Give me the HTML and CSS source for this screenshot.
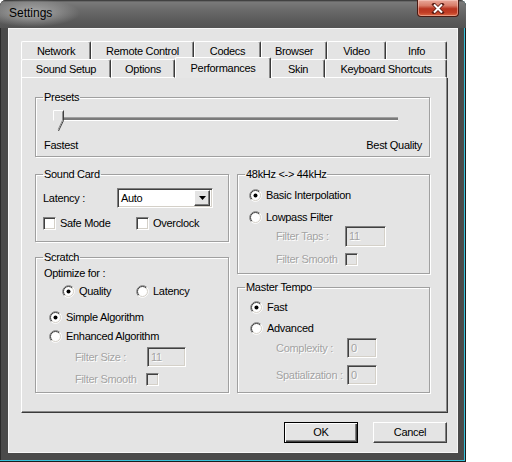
FILE: index.html
```html
<!DOCTYPE html>
<html>
<head>
<meta charset="utf-8">
<title>Settings</title>
<link rel="stylesheet" href="styles.css">
</head>
<body>
<svg class="defs" width="0" height="0">
  <defs>
    <symbol id="rb" viewBox="0 0 13 13">
      <circle cx="6.5" cy="6.5" r="5.5" fill="#fff"/>
      <path d="M2.26 10.74A6 6 0 0 1 10.74 2.26" fill="none" stroke="#808080"/>
      <path d="M2.96 10.04A5 5 0 0 1 10.04 2.96" fill="none" stroke="#404040"/>
      <path d="M10.74 2.26A6 6 0 0 1 2.26 10.74" fill="none" stroke="#fff"/>
      <path d="M10.04 2.96A5 5 0 0 1 2.96 10.04" fill="none" stroke="#d4d0c8"/>
    </symbol>
    <symbol id="rbon" viewBox="0 0 13 13">
      <use href="#rb"/>
      <circle cx="6.5" cy="6.5" r="2" fill="#000"/>
    </symbol>
  </defs>
</svg>

<div class="window">
  <div class="titlebar">
    <span class="title">Settings</span>
    <div class="close">
      <svg width="14" height="11" viewBox="0 0 14 11">
        <path d="M3 1.5L11 9.5M11 1.5L3 9.5" stroke="#5a1b12" stroke-width="3.6" stroke-linecap="square"/>
        <path d="M3 1.5L11 9.5M11 1.5L3 9.5" stroke="#fff" stroke-width="2"/>
      </svg>
    </div>
  </div>

  <div class="client">
    <div class="tabrow row1">
      <div class="tab w70">Network</div>
      <div class="tab w103">Remote Control</div>
      <div class="tab w67">Codecs</div>
      <div class="tab w66">Browser</div>
      <div class="tab w59">Video</div>
      <div class="tab w61">Info</div>
    </div>
    <div class="tabrow row2">
      <div class="tab w90">Sound Setup</div>
      <div class="tab w64">Options</div>
      <div class="tab w96 selected">Performances</div>
      <div class="tab w54">Skin</div>
      <div class="tab w122">Keyboard Shortcuts</div>
    </div>

    <div class="panel">
      <fieldset class="group presets">
        <legend>Presets</legend>
        <div class="slider">
          <svg width="347" height="22" viewBox="0 0 347 22">
            <rect x="2" y="7" width="343" height="1" fill="#a0a0a0"/>
            <rect x="2" y="8" width="343" height="2" fill="#7a7a7a"/>
            <rect x="2" y="10" width="343" height="1" fill="#fff"/>
            <polygon points="0.5,0.5 10.5,0.5 10.5,10.5 5.5,21 0.5,10.5" fill="#e4e4e4"/>
            <polyline points="0.5,10.5 0.5,0.5 10.5,0.5" fill="none" stroke="#fff"/>
            <polyline points="10.5,0.5 10.5,10.5 5.5,21" fill="none" stroke="#404040"/>
            <polyline points="9.5,1.5 9.5,10.2 5.2,19.5" fill="none" stroke="#909090"/>
          </svg>
        </div>
        <div class="scale"><span>Fastest</span><span>Best Quality</span></div>
      </fieldset>

      <div class="cols">
        <div class="col left">
          <fieldset class="group soundcard">
            <legend>Sound Card</legend>
            <div class="row latency">
              <span class="lbl w74">Latency :</span>
              <div class="combo">
                <span class="combo-text">Auto</span>
                <span class="combo-btn">
                  <svg width="7" height="4" viewBox="0 0 7 4"><polygon points="0,0 7,0 3.5,4" fill="#000"/></svg>
                </span>
              </div>
            </div>
            <div class="row checks">
              <span class="opt w93"><span class="check"></span>Safe Mode</span>
              <span class="opt"><span class="check"></span>Overclock</span>
            </div>
          </fieldset>

          <fieldset class="group scratch">
            <legend>Scratch</legend>
            <div class="row optimize">Optimize for :</div>
            <div class="row quality">
              <span class="opt w74"><svg class="radio"><use href="#rbon"/></svg>Quality</span>
              <span class="opt"><svg class="radio"><use href="#rb"/></svg>Latency</span>
            </div>
            <div class="row simple">
              <span class="opt"><svg class="radio"><use href="#rbon"/></svg>Simple Algorithm</span>
            </div>
            <div class="row enhanced">
              <span class="opt"><svg class="radio"><use href="#rb"/></svg>Enhanced Algorithm</span>
            </div>
            <div class="row field fsize">
              <span class="lbl disabled w72">Filter Size :</span>
              <span class="edit w39">11</span>
            </div>
            <div class="row field fsmooth">
              <span class="lbl disabled w71">Filter Smooth</span>
              <span class="check off"></span>
            </div>
          </fieldset>
        </div>

        <div class="col right">
          <fieldset class="group khz">
            <legend>48kHz &lt;-&gt; 44kHz</legend>
            <div class="row basic">
              <span class="opt"><svg class="radio"><use href="#rbon"/></svg>Basic Interpolation</span>
            </div>
            <div class="row lowpass">
              <span class="opt"><svg class="radio"><use href="#rb"/></svg>Lowpass Filter</span>
            </div>
            <div class="row field taps">
              <span class="lbl disabled w69">Filter Taps :</span>
              <span class="edit w41 h21">11</span>
            </div>
            <div class="row field ksmooth">
              <span class="lbl disabled w69">Filter Smooth</span>
              <span class="check off"></span>
            </div>
          </fieldset>

          <fieldset class="group tempo">
            <legend>Master Tempo</legend>
            <div class="row fast">
              <span class="opt"><svg class="radio"><use href="#rbon"/></svg>Fast</span>
            </div>
            <div class="row advanced">
              <span class="opt"><svg class="radio"><use href="#rb"/></svg>Advanced</span>
            </div>
            <div class="row field complexity">
              <span class="lbl disabled w71">Complexity :</span>
              <span class="edit w30">0</span>
            </div>
            <div class="row field spatial">
              <span class="lbl disabled w71">Spatialization :</span>
              <span class="edit w30">0</span>
            </div>
          </fieldset>
        </div>
      </div>
    </div>

    <div class="buttons">
      <button class="btn default">OK</button>
      <button class="btn">Cancel</button>
    </div>
  </div>
</div>
</body>
</html>
```

FILE: styles.css
```css
html, body {
  margin: 0;
  padding: 0;
  background: #fff;
}

body {
  font-family: "Liberation Sans", Arial, sans-serif;
  font-size: 11px;
  letter-spacing: -0.3px;
  color: #000;
  width: 512px;
  height: 462px;
  overflow: hidden;
}

.defs {
  display: block;
  width: 0;
  height: 0;
  overflow: hidden;
}

.window {
  width: 466px;
  height: 462px;
  box-sizing: border-box;
  display: flex;
  flex-direction: column;
  background: #4a4a4a;
  border-radius: 6px 6px 0 0;
  padding: 0 8px 9px 8px;
  box-shadow: inset -1px -1px 0 #1c1c1c, inset -2px -2px 0 #38c2da, inset 1px 0 0 #2a2a2a;
}

.titlebar {
  height: 28px;
  margin: 0 -8px;
  padding: 0 7px 0 9px;
  display: flex;
  align-items: flex-start;
  border-radius: 6px 6px 0 0;
  background:
    radial-gradient(ellipse 48px 14px at 32px 13px, rgba(200,200,200,0.75), rgba(200,200,200,0) 100%),
    linear-gradient(180deg, #2e2e2e 0px, #7a7a7a 2px, #6a6a6a 10px, #5b5b5b 20px, #535353 28px);
}

.title {
  font-size: 12px;
  letter-spacing: 0;
  line-height: 14px;
  margin-top: 6px;
  color: #000;
}

.close {
  margin-left: auto;
  width: 42px;
  height: 17px;
  box-sizing: border-box;
  border: 1px solid #4a1a12;
  border-top: none;
  border-radius: 0 0 4px 4px;
  background: linear-gradient(180deg, #e9a89a 0%, #d87c68 35%, #b8341f 55%, #c13d25 78%, #dc6a45 100%);
  display: flex;
  align-items: center;
  justify-content: center;
  box-shadow: inset 0 0 0 1px rgba(255,220,210,0.45);
}

.client {
  flex: 1;
  box-sizing: border-box;
  background: #e4e4e4;
  border: 1px solid #f6f6f6;
  padding: 12px 0 0 12px;
  display: flex;
  flex-direction: column;
}

/* Tabs */
.tabrow {
  display: flex;
  width: 426px;
}

.row1 { height: 18px; }
.row2 { height: 19px; align-items: flex-end; }

.tab {
  box-sizing: border-box;
  height: 18px;
  display: flex;
  align-items: center;
  justify-content: center;
  line-height: 13px;
  padding-top: 1px;
  border-top: 1px solid #fff;
  border-left: 1px solid #fff;
  border-right: 1px solid #3a3a3a;
  border-radius: 2px 2px 0 0;
  box-shadow: inset -1px 0 0 #8a8a8a;
  white-space: nowrap;
}

.row2 .tab {
  height: 19px;
  border-bottom: 1px solid #fff;
}

.row2 .tab.selected {
  height: 21px;
  margin-top: -2px;
  border-bottom: none;
  padding-top: 0;
  background: #e6e6e6;
}

.w30 { width: 30px; }
.w39 { width: 39px; }
.w41 { width: 41px; }
.w54 { width: 54px; }
.w59 { width: 59px; }
.w61 { width: 61px; }
.w64 { width: 64px; }
.w66 { width: 66px; }
.w67 { width: 67px; }
.w69 { width: 69px; }
.w70 { width: 70px; }
.w71 { width: 71px; }
.w72 { width: 72px; }
.w74 { width: 74px; }
.w90 { width: 90px; }
.w93 { width: 93px; }
.w96 { width: 96px; }
.w103 { width: 103px; }
.w122 { width: 122px; }

/* Panel */
.panel {
  width: 427px;
  height: 335px;
  box-sizing: border-box;
  border-left: 1px solid #fff;
  border-right: 1px solid #3a3a3a;
  border-bottom: 1px solid #3a3a3a;
  box-shadow: inset -1px -1px 0 #8a8a8a;
  padding: 13px 0 0 13px;
}

.group {
  box-sizing: border-box;
  margin: 0;
  padding: 0;
  min-width: 0;
  border: 1px solid #a0a0a0;
  box-shadow: 1px 1px 0 #fff, inset 1px 1px 0 #fff;
}

.group legend {
  margin-left: 7px;
  padding: 0 1px;
  line-height: 13px;
}

.presets { width: 395px; height: 66px; }

.slider {
  margin: 6px 0 0 17px;
  height: 22px;
}

.slider svg { display: block; }

.scale {
  margin: 7px 7px 0 8px;
  line-height: 13px;
  display: flex;
  justify-content: space-between;
}

.cols {
  display: flex;
  gap: 8px;
  margin-top: 11px;
}

.col {
  display: flex;
  flex-direction: column;
}

.col.left { width: 194px; }
.col.right { width: 193px; }

.soundcard { height: 74px; }
.scratch { height: 142px; margin-top: 9px; }
.khz { height: 106px; }
.tempo { height: 112px; margin-top: 7px; }

.row {
  display: flex;
  align-items: center;
  line-height: 13px;
  height: 13px;
}

.opt {
  display: flex;
  align-items: center;
  gap: 4px;
  white-space: nowrap;
}

.lbl { white-space: nowrap; }

.disabled {
  color: #a3a3a3;
  text-shadow: 1px 1px 0 #fff;
}

.radio {
  width: 13px;
  height: 13px;
  flex: none;
}

.check {
  width: 13px;
  height: 13px;
  box-sizing: border-box;
  flex: none;
  background: #fff;
  border: 1px solid;
  border-color: #808080 #fff #fff #808080;
  box-shadow: inset 1px 1px 0 #404040, inset -1px -1px 0 #d4d0c8;
}

.check.off {
  background: #e4e4e4;
}

.edit {
  box-sizing: border-box;
  height: 20px;
  border: 1px solid;
  border-color: #808080 #fff #fff #808080;
  box-shadow: inset 1px 1px 0 #404040, inset -1px -1px 0 #d4d0c8;
  color: #a3a3a3;
  text-shadow: 1px 1px 0 #fff;
  padding-left: 3px;
  display: flex;
  align-items: center;
  line-height: 13px;
}

.edit.h21 { height: 21px; }

/* Sound card rows */
.latency {
  margin-top: 7px;
  padding-left: 7px;
  height: 20px;
}

.combo {
  width: 96px;
  height: 20px;
  box-sizing: border-box;
  background: #fff;
  border: 1px solid;
  border-color: #808080 #fff #fff #808080;
  box-shadow: inset 1px 1px 0 #404040, inset -1px -1px 0 #d4d0c8;
  display: flex;
  align-items: center;
  padding: 2px 2px 2px 3px;
}

.combo-text {
  flex: 1;
}

.combo-btn {
  width: 16px;
  height: 16px;
  box-sizing: border-box;
  background: #e4e4e4;
  border: 1px solid;
  border-color: #fff #404040 #404040 #fff;
  box-shadow: inset -1px -1px 0 #808080;
  display: flex;
  align-items: center;
  justify-content: center;
}

.combo-btn svg { display: block; }

.checks {
  margin-top: 9px;
  padding-left: 7px;
}

/* Scratch rows */
.optimize { margin-top: 3px; padding-left: 8px; }
.quality { margin-top: 5px; padding-left: 26px; }
.simple { margin-top: 13px; padding-left: 13px; }
.enhanced { margin-top: 6px; padding-left: 13px; }
.fsize { margin-top: 4px; padding-left: 39px; height: 20px; }
.fsmooth { margin-top: 6px; padding-left: 39px; }

/* 48k rows */
.basic { margin-top: 8px; padding-left: 11px; }
.lowpass { margin-top: 9px; padding-left: 11px; }
.taps { margin-top: 2px; padding-left: 38px; height: 21px; }
.ksmooth { margin-top: 6px; padding-left: 38px; }

/* Master tempo rows */
.fast { margin-top: 7px; padding-left: 12px; }
.advanced { margin-top: 8px; padding-left: 12px; }
.complexity { margin-top: 3px; padding-left: 38px; height: 20px; }
.spatial { margin-top: 7px; padding-left: 38px; height: 20px; }

/* Buttons */
.buttons {
  width: 427px;
  margin-top: 9px;
  display: flex;
  justify-content: flex-end;
  gap: 15px;
  box-sizing: border-box;
  padding-right: 1px;
}

.btn {
  width: 74px;
  height: 21px;
  box-sizing: border-box;
  margin: 0;
  padding: 0;
  font: inherit;
  letter-spacing: inherit;
  color: #000;
  background: #e4e4e4;
  border: 1px solid;
  border-color: #fff #404040 #404040 #fff;
  box-shadow: inset -1px -1px 0 #808080;
  line-height: 13px;
}

.btn.default {
  border: 1px solid #000;
  box-shadow: inset 1px 1px 0 #fff, inset -1px -1px 0 #404040, inset -2px -2px 0 #808080;
}
```
